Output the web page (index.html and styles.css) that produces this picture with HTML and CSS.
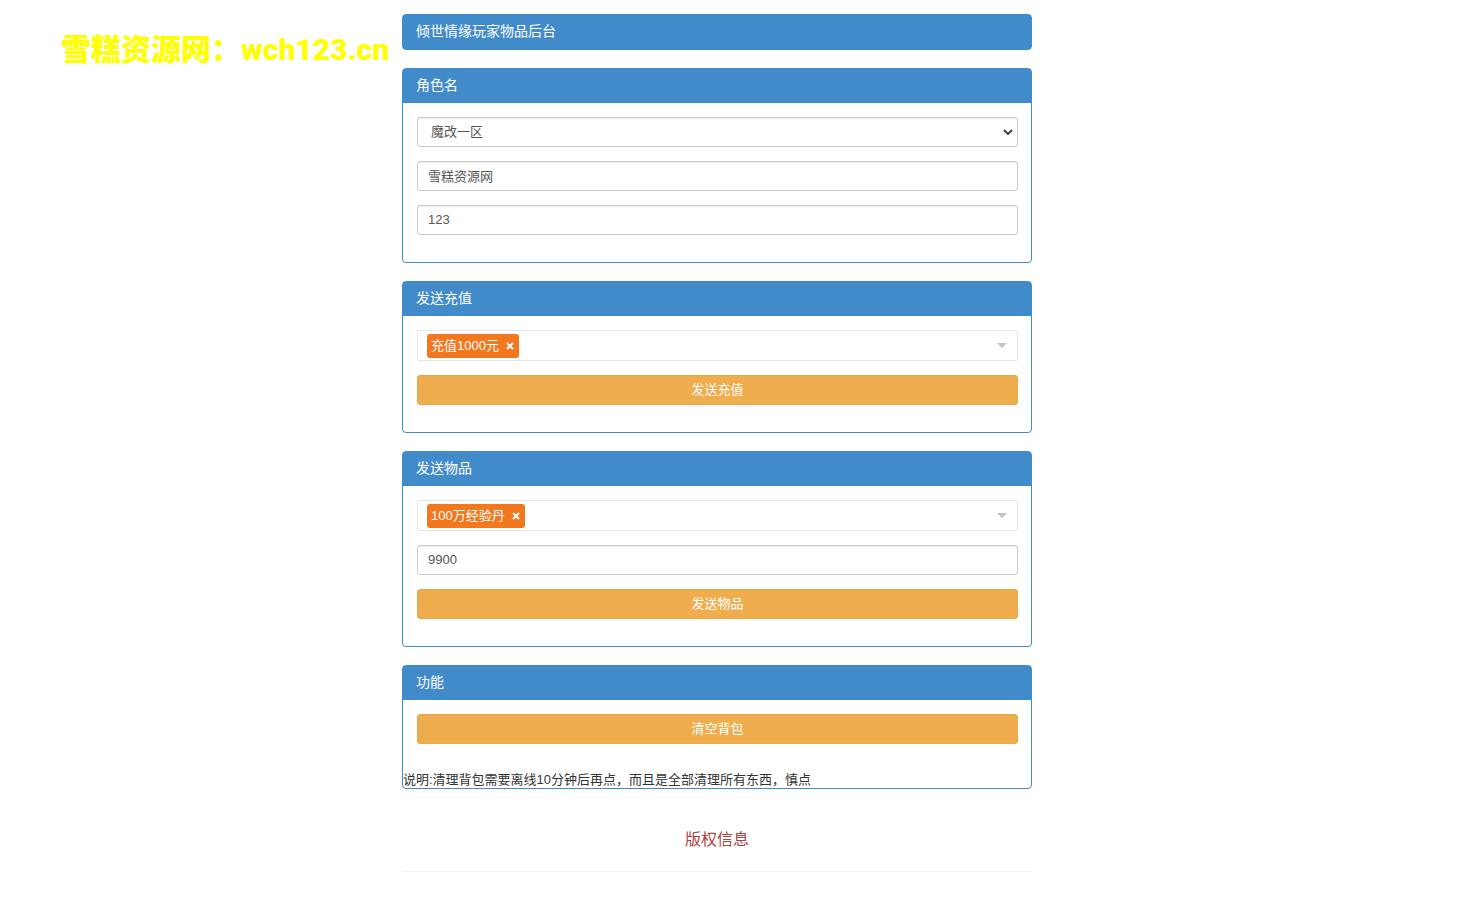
FILE: index.html
```html
<!DOCTYPE html>
<html lang="zh-CN">
<head>
<meta charset="utf-8">
<meta name="viewport" content="width=device-width, initial-scale=1">
<title>倾世情缘玩家物品后台</title>
<link rel="stylesheet" href="styles.css">
</head>
<body>
<div class="watermark">雪糕资源网：wch123.cn</div>
<main class="container">
  <header class="panel">
    <h1 class="panel-heading">倾世情缘玩家物品后台</h1>
  </header>

  <section class="panel">
    <h2 class="panel-heading">角色名</h2>
    <form class="panel-body">
      <div class="select-wrap">
        <select class="control select" aria-label="区服">
          <option>魔改一区</option>
        </select>
        <svg class="chevron" viewBox="0 0 10 6" aria-hidden="true"><path d="M1 1l4 4 4-4"/></svg>
      </div>
      <input class="control" type="text" value="雪糕资源网" aria-label="角色名">
      <input class="control" type="text" value="123" aria-label="密码">
    </form>
  </section>

  <section class="panel">
    <h2 class="panel-heading">发送充值</h2>
    <form class="panel-body">
      <div class="picker">
        <span class="tag">充值1000元<button class="tag-close" type="button" aria-label="移除充值1000元"><svg viewBox="0 0 8 8" aria-hidden="true"><path d="M1 1l6 6M7 1l-6 6"/></svg></button></span>
        <svg class="caret" viewBox="0 0 12 6" aria-hidden="true"><path d="M1 0h10L6 5z"/></svg>
      </div>
      <button class="btn" type="button">发送充值</button>
    </form>
  </section>

  <section class="panel">
    <h2 class="panel-heading">发送物品</h2>
    <form class="panel-body">
      <div class="picker">
        <span class="tag">100万经验丹<button class="tag-close" type="button" aria-label="移除100万经验丹"><svg viewBox="0 0 8 8" aria-hidden="true"><path d="M1 1l6 6M7 1l-6 6"/></svg></button></span>
        <svg class="caret" viewBox="0 0 12 6" aria-hidden="true"><path d="M1 0h10L6 5z"/></svg>
      </div>
      <input class="control" type="text" value="9900" aria-label="数量">
      <button class="btn" type="button">发送物品</button>
    </form>
  </section>

  <section class="panel">
    <h2 class="panel-heading">功能</h2>
    <form class="panel-body">
      <button class="btn" type="button">清空背包</button>
    </form>
    <p class="note">说明:清理背包需要离线10分钟后再点，而且是全部清理所有东西，慎点</p>
  </section>

  <footer class="footer">版权信息</footer>
</main>
</body>
</html>
```
FILE: styles.css
```css
* {
  box-sizing: border-box;
}

body {
  margin: 0;
  padding: 14px 30px 14px 0;
  background: #fff;
  color: #333;
  font-family: "Liberation Sans", "Noto Sans CJK SC", sans-serif;
  font-size: 13px;
  line-height: 17px;
}

.watermark {
  position: absolute;
  top: 30px;
  left: 61px;
  color: #ff0;
  font-family: Roboto, "Noto Sans CJK SC", sans-serif;
  font-size: 30px;
  font-weight: 900;
  line-height: 40px;
  white-space: nowrap;
}

.container {
  display: flex;
  flex-direction: column;
  gap: 18px;
  max-width: 630px;
  margin: 0 auto;
}

.panel {
  border: 1px solid #428bca;
  border-radius: 4px;
  background: #fff;
}

.panel-heading {
  margin: 0;
  padding: 7px 13px 9px;
  background: #428bca;
  color: #fff;
  font-size: 14px;
  font-weight: 400;
  line-height: 18px;
}

.panel-body {
  display: flex;
  flex-direction: column;
  gap: 14px;
  padding: 14px 13px 27px 14px;
}

.control {
  width: 100%;
  height: 30px;
  padding: 0 10px 2px;
  border: 1px solid #ccc;
  border-radius: 3px;
  background: #fff;
  box-shadow: inset 0 1px 1px rgba(0, 0, 0, 0.08);
  color: #555;
  font: inherit;
}

.select-wrap {
  display: flex;
  position: relative;
}

.select {
  padding-left: 13px;
  appearance: none;
}

.chevron {
  position: absolute;
  top: 12px;
  right: 5px;
  width: 10px;
  height: 6px;
  fill: none;
  stroke: #444;
  stroke-width: 2;
  pointer-events: none;
}

.picker {
  display: flex;
  align-items: center;
  justify-content: space-between;
  height: 31px;
  padding: 1px 9px 0;
  border: 1px solid #e6e6e6;
  border-radius: 2px;
}

.tag {
  display: flex;
  align-items: center;
  gap: 7px;
  height: 24px;
  padding: 0 5px 2px 4px;
  border-radius: 3px;
  background: #f2771d;
  color: #fff;
}

.tag-close {
  display: flex;
  margin: 2px 0 0;
  padding: 0;
  border: 0;
  background: none;
  cursor: pointer;
}

.tag-close svg {
  width: 8px;
  height: 8px;
  stroke: #fff;
  stroke-width: 2;
}

.caret {
  width: 12px;
  height: 6px;
  fill: #c2c2c2;
}

.btn {
  height: 30px;
  padding: 0 10px 2px;
  border: 1px solid #e8a849;
  border-radius: 3px;
  background: #f0ad4e;
  color: #fff;
  font: inherit;
  cursor: pointer;
}

.note {
  margin: 0;
}

.footer {
  padding: 23px 0 21px;
  border-bottom: 1px solid #f2f2f2;
  color: #a94442;
  font-size: 16px;
  line-height: 20px;
  text-align: center;
}
```
